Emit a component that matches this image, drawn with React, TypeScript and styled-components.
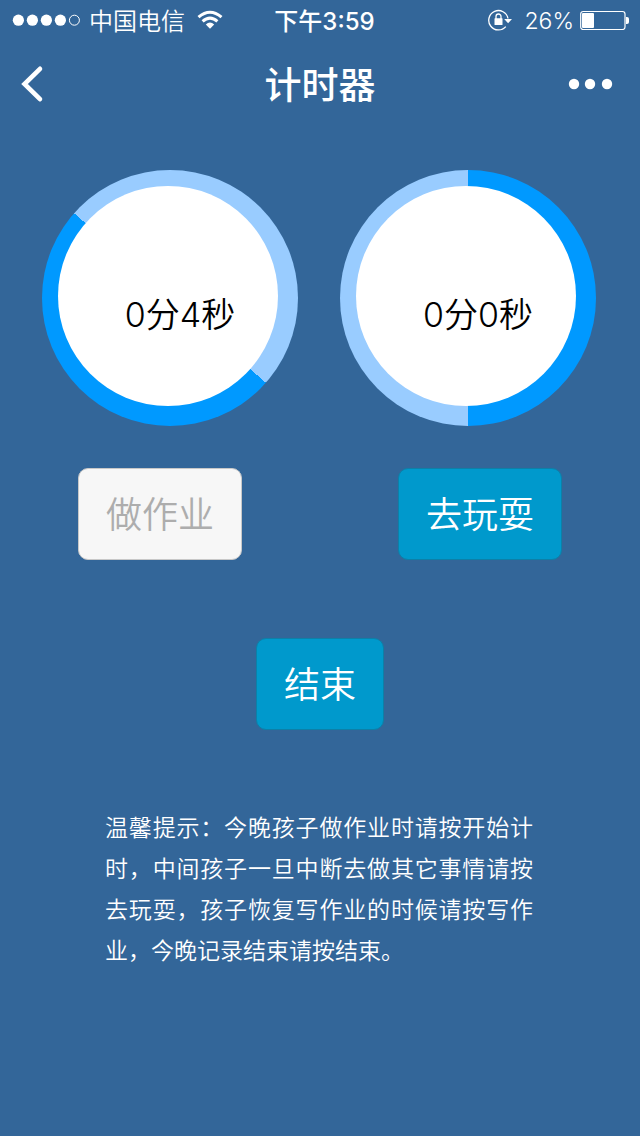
import React from "react";
import styled, { createGlobalStyle } from "styled-components";

const GlobalStyle = createGlobalStyle`
  *, *::before, *::after { box-sizing: border-box; }
  body {
    margin: 0;
    background: #336699;
    font-family: Inter, "Noto Sans CJK SC", sans-serif;
  }
`;

const Page = styled.div`
  min-height: 100vh;
  color: #ffffff;
  background: #336699;
`;

const StatusBar = styled.div`
  display: grid;
  grid-template-columns: 1fr auto 1fr;
  align-items: center;
  height: 40px;
  padding: 0 11px 0 12px;
  font-size: 24px;
  line-height: 36px;
`;

const StatusGroup = styled.div<{ $end?: boolean }>`
  display: flex;
  align-items: center;
  justify-content: ${(p) => (p.$end ? "flex-end" : "flex-start")};
  white-space: nowrap;
`;

const Carrier = styled.span`
  margin: 0 12px 0 8px;
  padding-top: 4px;
  font-weight: 350;
`;

const Clock = styled.time`
  padding: 3px 0 0 8px;
  font-weight: 500;
`;

const Percent = styled.span`
  margin: 0 6px 0 12px;
  padding-top: 2px;
  font-size: 23px;
  font-weight: 350;
`;

const NavBar = styled.header`
  display: grid;
  grid-template-columns: 1fr auto 1fr;
  align-items: center;
  height: 88px;
  padding: 0 20px;
`;

const Title = styled.h1`
  margin: 0;
  padding-top: 4px;
  font-size: 37px;
  line-height: 48px;
  font-weight: 500;
`;

const IconButton = styled.button<{ $end?: boolean }>`
  display: flex;
  align-items: center;
  justify-self: ${(p) => (p.$end ? "end" : "start")};
  height: 64px;
  padding: 0;
  border: 0;
  background: none;
  color: inherit;
  cursor: pointer;
`;

const Timers = styled.section`
  display: flex;
  justify-content: space-between;
  padding: 42px 44px 0 42px;
`;

const Ring = styled.div<{ $from: number }>`
  width: 256px;
  height: 256px;
  padding: 16px;
  border-radius: 50%;
  background: conic-gradient(
    from ${(p) => p.$from}deg,
    #0099ff 0deg 180deg,
    #99ccff 180deg 360deg
  );
`;

const Dial = styled.div`
  display: flex;
  align-items: center;
  justify-content: center;
  width: 220px;
  height: 220px;
  padding: 38px 0 0 24px;
  border-radius: 50%;
  background: #ffffff;
  color: #000000;
  font-size: 34px;
  line-height: 48px;
  font-weight: 350;
  white-space: nowrap;
`;

const Actions = styled.div<{ $center?: boolean }>`
  display: flex;
  justify-content: ${(p) => (p.$center ? "center" : "space-between")};
  padding: ${(p) => (p.$center ? "78px" : "42px")} 78px 0;
`;

const Button = styled.button`
  height: 92px;
  padding: 2px 27px 0;
  border: 1px solid #0c80a8;
  border-radius: 10px;
  background: #0099cc;
  color: #ffffff;
  font-family: inherit;
  font-size: 36px;
  line-height: 48px;
  font-weight: 350;
  cursor: pointer;

  &:disabled {
    border-color: #c8c8c8;
    background: #f7f7f7;
    color: #adadad;
    cursor: default;
  }
`;

const Tip = styled.p`
  margin: 0;
  padding: 78px 107px 40px 105px;
  font-size: 23px;
  line-height: 41px;
  font-weight: 350;
  text-align: justify;
`;

function Signal() {
  return (
    <svg width="69" height="14" viewBox="0 0 69 14" fill="#fff" aria-label="信号">
      {[6, 20, 34, 48].map((x) => (
        <circle key={x} cx={x + 0.4} cy="7.2" r="5.6" />
      ))}
      <circle cx="62.4" cy="7.2" r="5" fill="none" stroke="#fff" />
    </svg>
  );
}

function Wifi() {
  return (
    <svg width="26" height="20" viewBox="0 0 26 20" fill="none" stroke="#fff" strokeWidth="3" aria-label="无线网络">
      <path d="M1.5 7.2Q13 -2.8 24.5 7.2" />
      <path d="M5.6 11.4Q13 4.8 20.4 11.4" />
      <path d="M8.8 14.4Q13 10.6 17.2 14.4L13 18.8Z" fill="#fff" stroke="none" />
    </svg>
  );
}

function RotationLock() {
  return (
    <svg width="24" height="22" viewBox="0 0 24 22" aria-label="方向锁定">
      <path d="M17.8 17.6A9.7 9.7 0 1 1 20 9.5" fill="none" stroke="#fff" strokeWidth="1.3" />
      <path d="M16.2 10H24L20.1 14.2Z" fill="#fff" />
      <rect x="6.5" y="9.3" width="8" height="6.7" rx="0.5" fill="#fff" />
      <path d="M8 10V7.5a2.5 2.5 0 0 1 5 0V10" fill="none" stroke="#fff" strokeWidth="1.3" />
    </svg>
  );
}

function Battery() {
  return (
    <svg width="49" height="20" viewBox="0 0 49 20" aria-label="电池">
      <rect x="0.7" y="1.5" width="44.3" height="18" rx="2.5" fill="none" stroke="#fff" strokeWidth="1.2" />
      <rect x="2" y="3" width="12" height="15" rx="1" fill="#fff" />
      <path d="M46 7h1q2 0 2 2v3q0 2 -2 2h-1z" fill="#fff" />
    </svg>
  );
}

const timers = [
  { minutes: 0, seconds: 4, from: 131.5 },
  { minutes: 0, seconds: 0, from: 0 },
];

export default function App() {
  return (
    <Page lang="zh-CN">
      <GlobalStyle />
      <StatusBar>
        <StatusGroup>
          <Signal />
          <Carrier>中国电信</Carrier>
          <Wifi />
        </StatusGroup>
        <Clock>下午3:59</Clock>
        <StatusGroup $end>
          <RotationLock />
          <Percent>26%</Percent>
          <Battery />
        </StatusGroup>
      </StatusBar>
      <NavBar>
        <IconButton aria-label="返回">
          <svg width="24" height="38" viewBox="0 0 24 38" fill="none" stroke="#fff" strokeWidth="4.6" strokeLinecap="round">
            <path d="M20 3.8L4.5 19L20 34.2" />
          </svg>
        </IconButton>
        <Title>计时器</Title>
        <IconButton $end aria-label="更多">
          <svg width="52" height="12" viewBox="0 0 52 12" fill="#fff">
            <circle cx="6" cy="6" r="5.2" />
            <circle cx="22" cy="6" r="5.2" />
            <circle cx="39" cy="6" r="5.2" />
          </svg>
        </IconButton>
      </NavBar>
      <main>
        <Timers>
          {timers.map((t) => (
            <Ring key={t.from} $from={t.from}>
              <Dial>
                {`${t.minutes}分${t.seconds}秒`}
              </Dial>
            </Ring>
          ))}
        </Timers>
        <Actions>
          <Button disabled>做作业</Button>
          <Button>去玩耍</Button>
        </Actions>
        <Actions $center>
          <Button>结束</Button>
        </Actions>
        <Tip>
          温馨提示：今晚孩子做作业时请按开始计时，中间孩子一旦中断去做其它事情请按去玩耍，孩子恢复写作业的时候请按写作业，今晚记录结束请按结束。
        </Tip>
      </main>
    </Page>
  );
}
